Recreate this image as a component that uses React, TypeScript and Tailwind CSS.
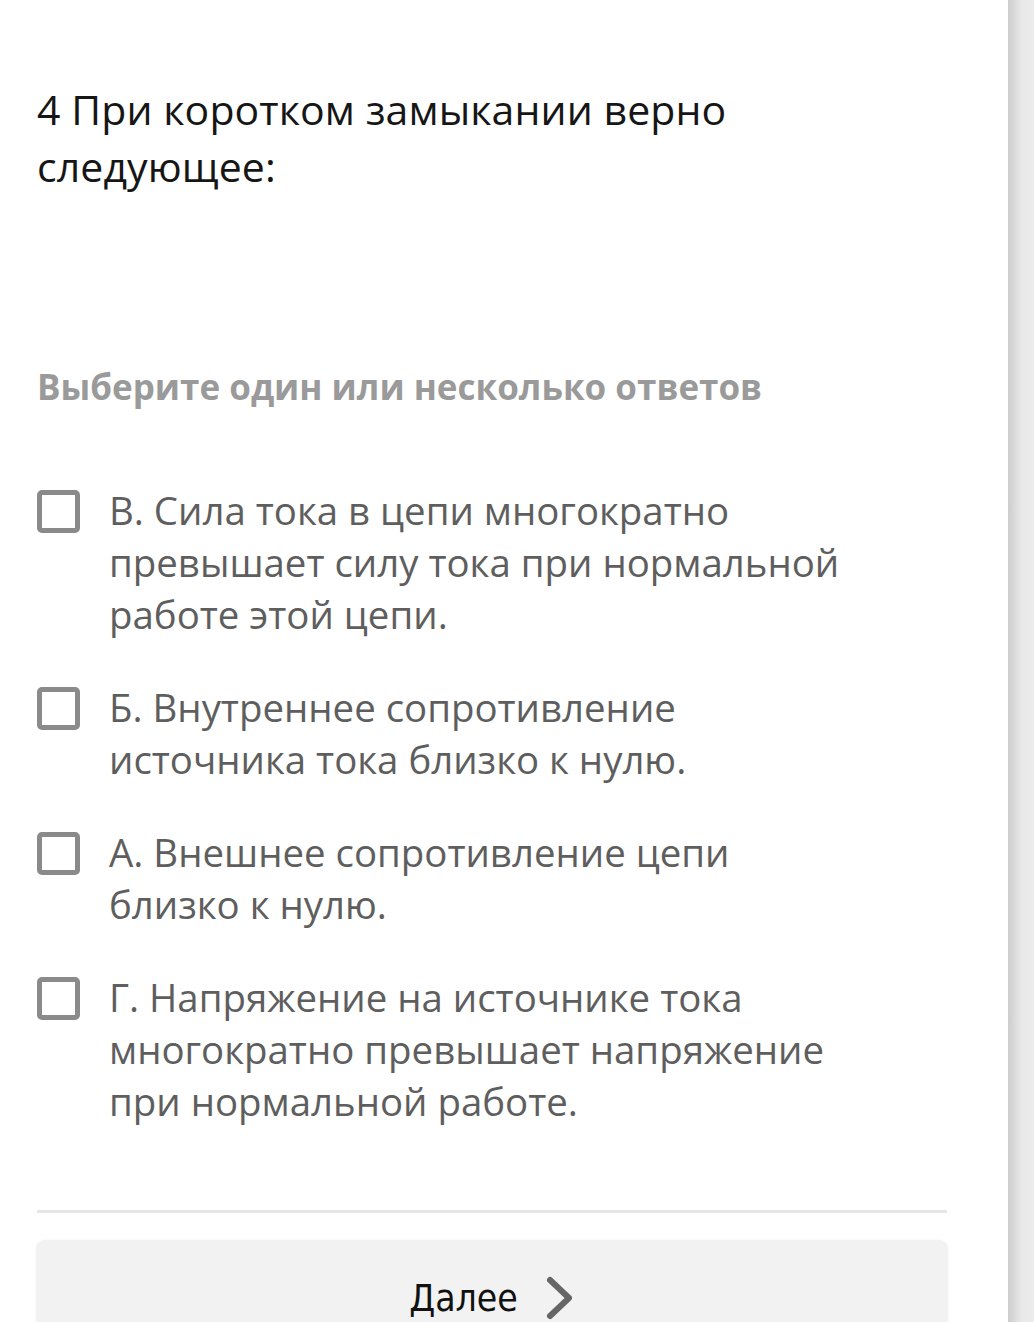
import React, { useState } from 'react';

type Option = { id: string; text: string };

const options: Option[] = [
  { id: 'v', text: 'В. Сила тока в цепи многократно превышает силу тока при нормальной работе этой цепи.' },
  { id: 'b', text: 'Б. Внутреннее сопротивление источника тока близко к нулю.' },
  { id: 'a', text: 'А. Внешнее сопротивление цепи близко к нулю.' },
  { id: 'g', text: 'Г. Напряжение на источнике тока многократно превышает напряжение при нормальной работе.' },
];

const App: React.FC = () => {
  const [checked, setChecked] = useState<Record<string, boolean>>({});

  const toggle = (id: string) => setChecked(prev => ({ ...prev, [id]: !prev[id] }));

  return (
    <div className="min-h-screen flex bg-white" style={{ fontFamily: '"Open Sans", "Noto Sans", sans-serif' }}>
      <main className="flex-1 pl-[37px] pr-[61px] pt-[81px]">
        <h1 className="text-[41px] leading-[57px] tracking-[0.1px] text-[#161616]">
          4 При коротком замыкании верно следующее:
        </h1>

        <p className="mt-[172px] text-[35px] leading-[40px] font-bold text-[#9a9a9a]">
          Выберите один или несколько ответов
        </p>

        <div className="mt-[77px] flex flex-col gap-[41px]">
          {options.map(o => (
            <label key={o.id} className="flex items-start gap-[29px] cursor-pointer">
              <span
                onClick={() => toggle(o.id)}
                className="mt-[6px] w-[43px] h-[43px] shrink-0 rounded-[5px] border-[5px] border-[#8a8a8a] bg-white flex items-center justify-center"
              >
                {checked[o.id] && (
                  <svg viewBox="0 0 24 24" className="w-7 h-7" fill="none" stroke="#555" strokeWidth="3">
                    <path d="M4 12l5 5L20 6" />
                  </svg>
                )}
              </span>
              <span className="max-w-[740px] text-[38.4px] leading-[52px] text-[#5e5e5e]">{o.text}</span>
            </label>
          ))}
        </div>

        <div className="mt-[83px] h-[3px] bg-[#e6e6e6]" />

        <button className="mt-[27px] w-full h-[110px] rounded-[8px] bg-[#f2f2f2] shadow-[0_1px_3px_rgba(0,0,0,0.12)] flex items-start justify-center gap-[27px] pt-[35px]">
          <span className="text-[37px] leading-[48px] text-[#111]" style={{ fontFamily: '"DejaVu Sans Condensed", "DejaVu Sans", sans-serif', fontStretch: 'condensed' }}>
            Далее
          </span>
          <svg viewBox="0 0 30 46" className="w-[30px] h-[46px]" fill="none" stroke="#666" strokeWidth="6" strokeLinecap="round" strokeLinejoin="round">
            <path d="M5 5l19 18L5 41" />
          </svg>
        </button>
      </main>
      <aside className="w-[26px] shrink-0 bg-gradient-to-r from-[#cdcdcd] via-[#e8e8e8] to-[#ececec]" />
    </div>
  );
};

export default App;
